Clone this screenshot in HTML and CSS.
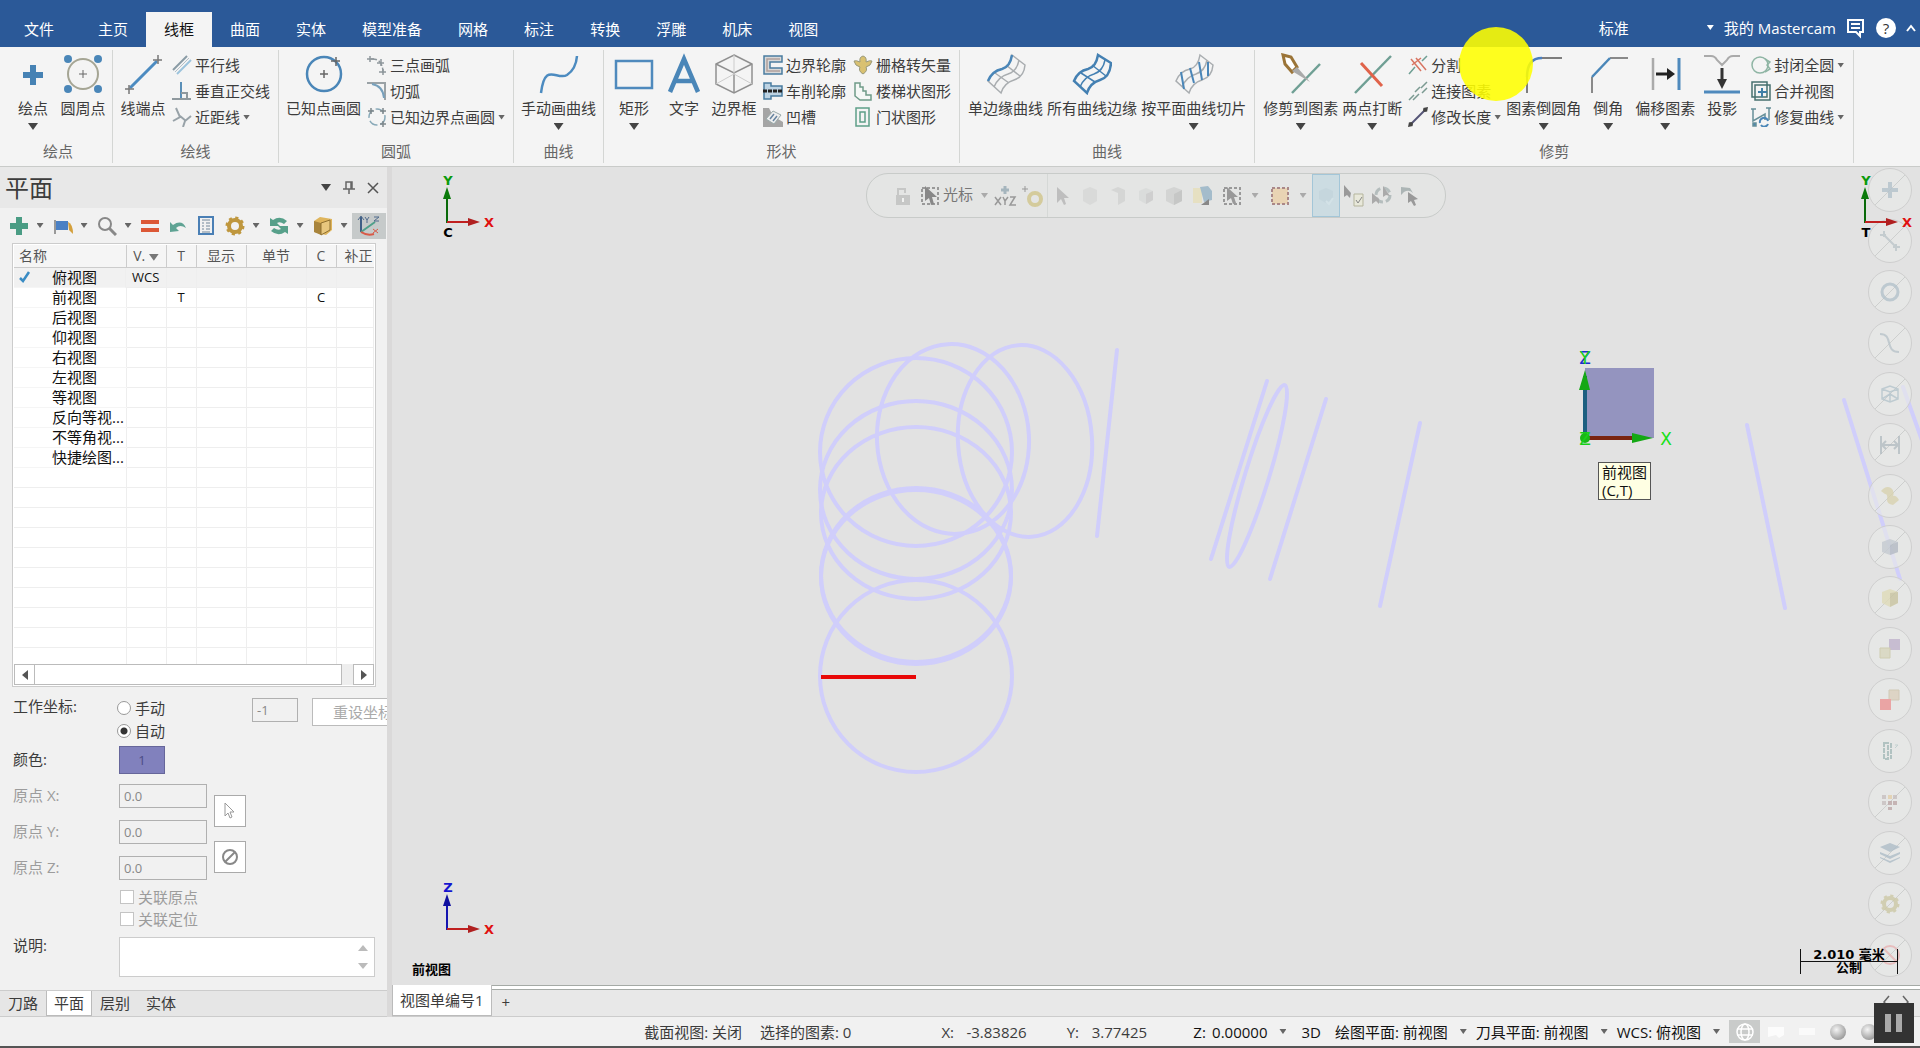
FILE: index.html
```html
<!DOCTYPE html>
<html lang="zh-CN">
<head>
    <meta charset="UTF-8" />
    <title>Mastercam</title>
    <link rel="stylesheet" href="styles.css">
</head>
<body>
    <header class="titlebar">
        <nav class="tabs">
            <button class="tab tab-file">文件</button>
            <button class="tab">主页</button>
            <button class="tab active">线框</button>
            <button class="tab">曲面</button>
            <button class="tab">实体</button>
            <button class="tab">模型准备</button>
            <button class="tab">网格</button>
            <button class="tab">标注</button>
            <button class="tab">转换</button>
            <button class="tab">浮雕</button>
            <button class="tab">机床</button>
            <button class="tab">视图</button>
        </nav>
        <div class="account">
            <button class="style-pick"><span>标准</span><i class="caret"></i></button>
            <a class="account-link" href="#">我的 Mastercam</a>
            <button class="icon-btn" aria-label="反馈"><svg width="20" height="22" fill="none" stroke="#fff" stroke-width="2"><path d="M2 3h15v12h-3v4l-4-4H2zM5 7h9M5 11h9"/></svg></button>
            <button class="help" aria-label="帮助">?</button>
            <button class="icon-btn" aria-label="折叠"><svg width="10" height="8" fill="none" stroke="#fff" stroke-width="2"><path d="M1 7l4-5 4 5"/></svg></button>
        </div>
    </header>

    <section class="ribbon">
        <div class="group">
            <div class="group-body">
                <button class="big"><svg width="40" height="42"><path d="M20 12v20M10 22h20" stroke="#4682b4" stroke-width="6"/></svg><span>绘点</span><i class="drop"></i></button>
                <button class="big"><svg width="40" height="42"><circle cx="20" cy="21" r="15" fill="none" stroke="#a5a594" stroke-width="2"/><path d="M20 17v8M16 21h8" stroke="#666"/><g fill="#4a86b8"><circle cx="5" cy="6" r="4"/><circle cx="35" cy="6" r="4"/><circle cx="5" cy="36" r="4"/><circle cx="35" cy="36" r="4"/></g></svg><span>圆周点</span></button>
            </div>
            <div class="group-name">绘点</div>
        </div>
        <div class="group">
            <div class="group-body">
                <button class="big"><svg width="40" height="42"><path d="M7 35L34 8" stroke="#4c8bc0" stroke-width="3"/><path d="M2 36h9M6 32v9M30 7h9M35 2v9" stroke="#777" stroke-width="1.5"/></svg><span>线端点</span></button>
                <div class="stack">
                    <button class="small"><svg width="20" height="20" stroke-width="2"><path d="M1 15L15 1" stroke="#8a9ba5"/><path d="M5 19L19 5" stroke="#9cc3dc"/><path d="M3 17L17 3" stroke="#b4bfc6" stroke-width="1"/></svg><span>平行线</span></button>
                    <button class="small"><svg width="20" height="20" fill="none"><path d="M9 1v17" stroke="#5a8fb8" stroke-width="2"/><path d="M0 18h19M9 12h6v6" stroke="#8f999e" stroke-width="2"/></svg><span>垂直正交线</span></button>
                    <button class="small"><svg width="20" height="20" fill="none" stroke="#98a2a8" stroke-width="2"><path d="M4 1l4 9-7 4M8 9l6 5M19 9l-6 5-2 6"/></svg><span>近距线</span><i class="caret"></i></button>
                </div>
            </div>
            <div class="group-name">绘线</div>
        </div>
        <div class="group">
            <div class="group-body">
                <button class="big"><svg width="40" height="42"><circle cx="20" cy="21" r="17" fill="none" stroke="#4a86b8" stroke-width="2.5"/><path d="M16 21h8M20 17v8M27 8h9M32 4v9" stroke="#666" stroke-width="1.5"/></svg><span>已知点画圆</span></button>
                <div class="stack">
                    <button class="small"><svg width="20" height="20" fill="none" stroke="#8e979c" stroke-width="1.5"><path d="M4 4q12-1 12 14" stroke-dasharray="6 2"/><path d="M0 4h7M3 1v6M10 8h7M14 4v7M12 17h7M16 14v6"/></svg><span>三点画弧</span></button>
                    <button class="small"><svg width="20" height="20" fill="none" stroke-width="2"><path d="M0 2h18v17" stroke="#9aa2a6"/><path d="M5 3q11 2 12 14" stroke="#77a0bc"/></svg><span>切弧</span></button>
                    <button class="small"><svg width="20" height="20" fill="none" stroke-width="1.5"><circle cx="10" cy="10" r="8" stroke="#88a9b8" stroke-dasharray="9 3"/><path d="M1 4h6M4 1v6M13 4h6M16 1v6M13 17h6M16 14v6" stroke="#7d868b"/></svg><span>已知边界点画圆</span><i class="caret"></i></button>
                </div>
            </div>
            <div class="group-name">圆弧</div>
        </div>
        <div class="group">
            <div class="group-body">
                <button class="big"><svg width="40" height="42"><path d="M2 40C6 8 18 28 28 22Q37 16 38 3" fill="none" stroke="#4c8bc0" stroke-width="2.5"/></svg><span>手动画曲线</span><i class="drop"></i></button>
            </div>
            <div class="group-name">曲线</div>
        </div>
        <div class="group">
            <div class="group-body">
                <button class="big"><svg width="40" height="42"><rect x="2" y="8" width="36" height="27" fill="none" stroke="#4f8abd" stroke-width="2.5"/></svg><span>矩形</span><i class="drop"></i></button>
                <button class="big"><svg width="40" height="42"><path d="M6 39L20 6l14 33M11 28h18" fill="none" stroke="#4a86b8" stroke-width="4.5"/></svg><span>文字</span></button>
                <button class="big"><svg width="40" height="42" fill="none" stroke="#909090" stroke-width="1.5"><path d="M20 2l18 9v20l-18 9-18-9V11z"/><path d="M2 11l18 9 18-9M20 20v20"/><path d="M20 2v19L2 31M20 21l18 10" stroke="#ccc" stroke-width="1"/></svg><span>边界框</span></button>
                <div class="stack">
                    <button class="small"><svg width="20" height="20"><path d="M1 1h18v6H7v6h12v6H1z" fill="#d8d8d8" stroke="#4a7ca0" stroke-width="1.5"/><path d="M17 4H4v12h13" fill="none" stroke="#b0a09c" stroke-width="1.5"/></svg><span>边界轮廓</span></button>
                    <button class="small"><svg width="20" height="20"><path d="M1 2h7v3h11v10H8v3H1z" fill="#bdd3e3" stroke="#4a7ca0" stroke-width="1.5"/><path d="M0 10h20" stroke="#222" stroke-width="3" stroke-dasharray="4 1"/></svg><span>车削轮廓</span></button>
                    <button class="small"><svg width="20" height="20"><path d="M0 1h6l4 8 10 6v5H0z" fill="#a5a5a5"/><path d="M3 12l7-8 8 4-7 9z" fill="#eee" stroke="#9aa" /><path d="M7 12l4-5M10 14l4-5" stroke="#6784a0" stroke-width="1.5"/></svg><span>凹槽</span></button>
                </div>
                <div class="stack">
                    <button class="small"><svg width="20" height="20"><path d="M10 1q4 1 3 6 4-2 6-1-1 5-6 6 2 4-3 7-5-3-3-7-5-1-6-6 2-1 6 1-1-5 3-6z" fill="#d9c171" stroke="#9a9a7d"/></svg><span>栅格转矢量</span></button>
                    <button class="small"><svg width="20" height="20"><path d="M2 2h5v4h3v4h3v4h5v5H7L2 15z" fill="#f5f8f6" stroke="#6f9a88" stroke-width="1.5"/></svg><span>楼梯状图形</span></button>
                    <button class="small"><svg width="20" height="20" fill="none" stroke="#5d9f88" stroke-width="1.5"><path d="M3 1h13v18H3zM7 5h5v10H7z"/></svg><span>门状图形</span></button>
                </div>
            </div>
            <div class="group-name">形状</div>
        </div>
        <div class="group roomy">
            <div class="group-body">
                <button class="big"><svg width="40" height="42" fill="none" stroke="#a9adb0" stroke-width="1.5"><path d="M2 28Q6 18 16 16Q24 14 26 2L39 12Q38 24 28 27Q18 30 15 40zM8 34Q12 24 22 21Q31 18 33 7M9 20l14 10M20 12l14 11"/><path d="M2 28Q6 18 16 16Q24 14 26 2" stroke="#4a86b8" stroke-width="2.5"/></svg><span>单边缘曲线</span></button>
                <button class="big"><svg width="40" height="42" fill="none" stroke="#4480b2" stroke-width="2.5"><path d="M2 28Q6 18 16 16Q24 14 26 2L39 10Q38 24 28 27Q18 30 15 40z"/><path d="M8 34Q12 24 22 21Q31 18 33 7M9 20l14 9M20 12l14 11" stroke-width="1.5"/></svg><span>所有曲线边缘</span></button>
                <button class="big"><svg width="40" height="42" fill="none" stroke="#a9adb0" stroke-width="1.5"><path d="M2 28Q6 18 16 16Q24 14 26 2L39 12Q38 24 28 27Q18 30 15 40zM8 34Q12 24 22 21Q31 18 33 7"/><path d="M7 19l3 17M16 15l4 15M25 9l3 18M34 9v14" stroke="#4a86b8" stroke-width="2"/></svg><span>按平面曲线切片</span><i class="drop"></i></button>
            </div>
            <div class="group-name">曲线</div>
        </div>
        <div class="group roomy">
            <div class="group-body">
                <button class="big"><svg width="40" height="42"><path d="M11 40L39 11" stroke="#6f9f94" stroke-width="2.5"/><path d="M2 2l8 2 6 10-5 5-7-8z" fill="#fff" stroke="#9b7437" stroke-width="3"/><path d="M11 18l5-4 13 15z" fill="#aaa"/></svg><span>修剪到图素</span><i class="drop"></i></button>
                <button class="big"><svg width="40" height="42"><path d="M3 40L39 3" stroke="#6f9f94" stroke-width="2.5"/><path d="M9 10l21 23" stroke="#e0634a" stroke-width="3"/></svg><span>两点打断</span><i class="drop"></i></button>
                <div class="stack">
                    <button class="small"><svg width="20" height="20" stroke-width="1.5"><path d="M1 19l6-7M14 6l5-5" stroke="#6f9f94"/><path d="M3 4l10 12M8 3l10 12M4 10l9-7" stroke="#d87562"/></svg><span>分割</span></button>
                    <button class="small"><svg width="20" height="20" stroke="#7b9a92" stroke-width="1.5"><path d="M1 19l5-5M13 7l6-6M5 19l6-6M14 12l5-5M7 11l5-5" /></svg><span>连接图素</span></button>
                    <button class="small"><svg width="20" height="20"><path d="M2 18L18 2" stroke="#557" stroke-width="2"/><path d="M0 20l1-5 4 4zM20 0l-5 1 4 4z" fill="#444"/><circle cx="3" cy="17" r="2" fill="#444"/><circle cx="17" cy="3" r="2" fill="#444"/></svg><span>修改长度</span><i class="caret"></i></button>
                </div>
                <button class="big"><svg width="40" height="42" fill="none" stroke-width="1.5"><path d="M3 40V24M18 5h20" stroke="#555"/><path d="M3 24Q3 5 18 5" stroke="#4a7fc0" stroke-width="2.5"/></svg><span>图素倒圆角</span><i class="drop"></i></button>
                <button class="big"><svg width="40" height="42" fill="none" stroke-width="1.5"><path d="M4 40V24M22 5h18" stroke="#666"/><path d="M4 24L22 5" stroke="#4a86b8" stroke-width="2.5"/></svg><span>倒角</span><i class="drop"></i></button>
                <button class="big"><svg width="40" height="42"><path d="M8 5v32" stroke="#aaa" stroke-width="2.5"/><path d="M34 5v32" stroke="#4f8abd" stroke-width="3"/><path d="M11 21h12" stroke="#222" stroke-width="3"/><path d="M22 15l8 6-8 6z" fill="#222"/></svg><span>偏移图素</span><i class="drop"></i></button>
                <button class="big"><svg width="40" height="42"><path d="M2 3h7q4 0 6 4l5 5 5-5q2-4 6-4h7" fill="none" stroke="#aaa" stroke-width="2"/><path d="M20 15v14" stroke="#333" stroke-width="3"/><path d="M15 26h10l-5 10z" fill="#333"/><path d="M2 39h36" stroke="#4f8abd" stroke-width="3"/></svg><span>投影</span></button>
                <div class="stack">
                    <button class="small"><svg width="20" height="20" fill="none" stroke="#8fb5a4" stroke-width="1.5"><circle cx="9" cy="10" r="8"/><path d="M14 4l5 3-3 3 3 4-5 3"/></svg><span>封闭全圆</span><i class="caret"></i></button>
                    <button class="small"><svg width="20" height="20" fill="none" stroke="#47706f" stroke-width="1.5"><path d="M1 1h15v15H1zM4 4h15v15H4z"/><path d="M11 7v9M7 11h9" stroke="#3f7fa8" stroke-width="2"/></svg><span>合并视图</span></button>
                    <button class="small"><svg width="20" height="20" fill="none" stroke="#668f98" stroke-width="1.5"><path d="M2 2v12l12-7v6M18 1v12M0 2h5M15 1h5"/><path d="M9 16a4 4 0 0 1 8-2M17 17a4 4 0 0 1-7 1" stroke="#4a86b8" stroke-width="2"/><path d="M2 16h3v3H2z" fill="#4a86b8"/></svg><span>修复曲线</span><i class="caret"></i></button>
                </div>
            </div>
            <div class="group-name">修剪</div>
        </div>
        <div class="highlight"></div>
    </section>

    <main class="workspace">
        <aside class="panel">
            <div class="panel-title">
                <h1>平面</h1>
                <div class="panel-actions">
                    <button class="icon-btn" aria-label="选项"><i class="drop"></i></button>
                    <button class="icon-btn" aria-label="固定"><svg width="12" height="14" fill="none" stroke="#666" stroke-width="1.5"><path d="M3 1h6v7H3zM0 8h12M6 8v5M8 1v7"/></svg></button>
                    <button class="icon-btn" aria-label="关闭"><svg width="12" height="12" stroke="#555" stroke-width="1.5"><path d="M1 1l10 10M11 1L1 11"/></svg></button>
                </div>
            </div>
            <div class="panel-tools">
                <button class="tool split" aria-label="新建"><svg width="20" height="20"><path d="M10 1v18M1 10h18" stroke="#4a9c84" stroke-width="6"/></svg><i class="caret"></i></button>
                <button class="tool split" aria-label="选择"><svg width="20" height="20"><path d="M2 4v14" stroke="#999" stroke-width="2"/><path d="M3 5h12v9H3z" fill="#4a80c4"/><path d="M15 6q5 2 5 12l-4-4z" fill="#d4a03c"/></svg><i class="caret"></i></button>
                <button class="tool split" aria-label="查找"><svg width="20" height="20" fill="none" stroke="#888"><circle cx="8" cy="8" r="6" stroke-width="2"/><path d="M12 12l7 7" stroke-width="3"/></svg><i class="caret"></i></button>
                <button class="tool" aria-label="设为相同"><svg width="20" height="20"><path d="M1 4h18v4H1zM1 12h18v4H1z" fill="#dc5836"/></svg></button>
                <button class="tool" aria-label="重设"><svg width="20" height="20"><path d="M2 6v10l9-1-3-3q4-4 10 0-4-9-13-3z" fill="#5fa394"/></svg></button>
                <button class="tool" aria-label="属性"><svg width="20" height="20" fill="none" stroke="#4a7fb5"><path d="M3 1h14v17H3z" stroke-width="2"/><path d="M6 4h8M6 7h2M10 7h4M6 10h2M10 10h4M6 13h2M10 13h4M6 16h8" stroke="#73879a"/></svg></button>
                <button class="tool split" aria-label="显示选项"><svg width="20" height="20" fill="none" stroke="#bf973e"><circle cx="10" cy="10" r="6" stroke-width="4"/><circle cx="10" cy="10" r="8" stroke-width="3" stroke-dasharray="3 3.28"/></svg><i class="caret"></i></button>
                <button class="tool split" aria-label="刷新"><svg width="20" height="20"><path d="M1 2l3 2q7-5 14 1l-3 3q-4-3-7-1l3 3H1zM19 18l-3-2q-7 5-14-1l3-3q4 3 7 1l-3-3h10z" fill="#57a08a"/></svg><i class="caret"></i></button>
                <button class="tool split" aria-label="实体"><svg width="20" height="20"><path d="M1 5l6-4 12 2v11l-6 5-12-3z" fill="#dfb55c"/><path d="M1 5l7 2v12l-7-3z" fill="#a8843c"/><path d="M8 7l9-3v10l-9 5z" fill="#e8c77e" stroke="#8f7030"/></svg><i class="caret"></i></button>
                <button class="tool pressed" aria-label="显示坐标轴"><svg width="24" height="22" fill="none"><path d="M4 2v15" stroke="#3f5f86" stroke-width="2"/><path d="M4 17L18 7" stroke="#4fa08a" stroke-width="2"/><path d="M4 17q6 4 13 2" stroke="#d85a48" stroke-width="2"/><path d="M1 5l3-4 3 4M8 2l2 3 2-3M10 5v3M17 2h5l-5 4h5" stroke="#516b8c"/><path d="M16 14l5 4M21 14l-5 4" stroke="#d85a48"/></svg></button>
            </div>

            <div class="grid-box">
                <div class="grid-rows">
                    <table class="planes">
                        <colgroup><col class="c-name"><col class="c-wcs"><col class="c-t"><col class="c-show"><col class="c-sec"><col class="c-t"><col></colgroup>
                        <thead>
                            <tr><th class="left">名称</th><th class="sorted">V. <i class="drop"></i></th><th>T</th><th>显示</th><th>单节</th><th>C</th><th class="cut">补正</th></tr>
                        </thead>
                        <tbody>
                            <tr class="selected"><td class="name checked"><svg width="12" height="12" fill="none" stroke="#3a8cc4" stroke-width="2.5"><path d="M1 7l3 3 6-9"/></svg>俯视图</td><td>WCS</td><td></td><td></td><td></td><td></td><td></td></tr>
                            <tr><td class="name">前视图</td><td></td><td>T</td><td></td><td></td><td>C</td><td></td></tr>
                            <tr><td class="name">后视图</td><td></td><td></td><td></td><td></td><td></td><td></td></tr>
                            <tr><td class="name">仰视图</td><td></td><td></td><td></td><td></td><td></td><td></td></tr>
                            <tr><td class="name">右视图</td><td></td><td></td><td></td><td></td><td></td><td></td></tr>
                            <tr><td class="name">左视图</td><td></td><td></td><td></td><td></td><td></td><td></td></tr>
                            <tr><td class="name">等视图</td><td></td><td></td><td></td><td></td><td></td><td></td></tr>
                            <tr><td class="name">反向等视...</td><td></td><td></td><td></td><td></td><td></td><td></td></tr>
                            <tr><td class="name">不等角视...</td><td></td><td></td><td></td><td></td><td></td><td></td></tr>
                            <tr><td class="name">快捷绘图...</td><td></td><td></td><td></td><td></td><td></td><td></td></tr>
                            <tr><td></td><td></td><td></td><td></td><td></td><td></td><td></td></tr>
                            <tr><td></td><td></td><td></td><td></td><td></td><td></td><td></td></tr>
                            <tr><td></td><td></td><td></td><td></td><td></td><td></td><td></td></tr>
                            <tr><td></td><td></td><td></td><td></td><td></td><td></td><td></td></tr>
                            <tr><td></td><td></td><td></td><td></td><td></td><td></td><td></td></tr>
                            <tr><td></td><td></td><td></td><td></td><td></td><td></td><td></td></tr>
                            <tr><td></td><td></td><td></td><td></td><td></td><td></td><td></td></tr>
                            <tr><td></td><td></td><td></td><td></td><td></td><td></td><td></td></tr>
                            <tr><td></td><td></td><td></td><td></td><td></td><td></td><td></td></tr>
                            <tr><td></td><td></td><td></td><td></td><td></td><td></td><td></td></tr>
                        </tbody>
                    </table>
                </div>
                <div class="scrollbar">
                    <button aria-label="向左"><svg width="8" height="12"><path d="M7 1v10L1 6z" fill="#555"/></svg></button>
                    <div class="thumb"></div>
                    <button aria-label="向右"><svg width="8" height="12"><path d="M1 1v10l6-5z" fill="#555"/></svg></button>
                </div>
            </div>

            <form class="props">
                <div class="row work">
                    <span class="label">工作坐标:</span>
                    <div class="radios">
                        <label><input type="radio" name="wcs">手动</label>
                        <label><input type="radio" name="wcs" checked>自动</label>
                    </div>
                    <input class="offset" type="text" value="-1" aria-label="工作坐标值" disabled>
                    <button class="reset" type="button" disabled>重设坐标</button>
                </div>
                <div class="row">
                    <span class="label">颜色:</span>
                    <button class="swatch" type="button">1</button>
                </div>
                <div class="origin">
                    <div>
                        <div class="row dim"><label class="label" for="ox">原点 X:</label><input id="ox" type="text" value="0.0" disabled></div>
                        <div class="row dim"><label class="label" for="oy">原点 Y:</label><input id="oy" type="text" value="0.0" disabled></div>
                        <div class="row dim"><label class="label" for="oz">原点 Z:</label><input id="oz" type="text" value="0.0" disabled></div>
                    </div>
                    <div class="origin-actions">
                        <button type="button" aria-label="选择原点"><svg width="12" height="18" fill="none" stroke="#999"><path d="M1 1v13l3-3 2 5 2-1-2-5h4z"/></svg></button>
                        <button type="button" aria-label="清除原点"><svg width="18" height="18" fill="none" stroke="#888" stroke-width="2"><circle cx="9" cy="9" r="7"/><path d="M4 14L14 4"/></svg></button>
                    </div>
                </div>
                <div class="checks">
                    <label><input type="checkbox" disabled>关联原点</label>
                    <label><input type="checkbox" disabled>关联定位</label>
                </div>
                <div class="row note">
                    <label class="label" for="note">说明:</label>
                    <div class="note-box">
                        <textarea id="note"></textarea>
                        <span class="spin"><i class="drop up"></i><i class="drop"></i></span>
                    </div>
                </div>
            </form>

            <nav class="panel-tabs">
                <button>刀路</button><button class="active">平面</button><button>层别</button><button>实体</button>
            </nav>
        </aside>

        <section class="view">
            <div class="canvas">
                <svg class="drawing" viewBox="392 167 1528 818" preserveAspectRatio="xMinYMin meet">
                    <g fill="none" stroke="#d0cefb" stroke-width="4" stroke-linecap="round">
                        <ellipse cx="916" cy="452" rx="96" ry="94"/>
                        <ellipse cx="916" cy="490" rx="96" ry="89"/>
                        <ellipse cx="916" cy="513" rx="95" ry="86"/>
                        <ellipse cx="916" cy="575" rx="95" ry="87"/>
                        <ellipse cx="916" cy="577" rx="95" ry="87"/>
                        <ellipse cx="916" cy="676" rx="96" ry="96"/>
                        <ellipse cx="953" cy="439" rx="76" ry="95" transform="rotate(-3 953 439)"/>
                        <ellipse cx="1025" cy="441" rx="67" ry="96" transform="rotate(-4 1025 441)"/>
                        <ellipse cx="1257" cy="476" rx="12" ry="95" transform="rotate(17 1257 476)"/>
                        <path d="M1117 350L1097 536M1267 381L1211 559M1326 399L1270 579M1420 423L1380 606M1747 425L1785 608M1844 400L1900 579M1903 387L1924 446"/>
                    </g>
                    <path d="M821 677h95" stroke="#e80808" stroke-width="4"/>
                    <!-- plane cube -->
                    <rect x="1585" y="368" width="69" height="70" fill="#9494bf"/>
                    <path d="M1585 438v-62" stroke="#1d5f80" stroke-width="4"/>
                    <path d="M1585 438h50" stroke="#7a2410" stroke-width="4"/>
                    <path d="M1579 390h11l-5-20zM1632 433v10l21-5z" fill="#14a814"/>
                    <circle cx="1585" cy="438" r="5" fill="#18b818"/>
                    <g class="axis-text" text-anchor="middle">
                        <text x="1585" y="364" fill="#1c2fd0">Z</text>
                        <text x="1585" y="364" fill="#18d018">Y</text>
                        <text x="1585" y="445" fill="#18d018">Z</text>
                        <text x="1666" y="445" fill="#18e018">X</text>
                    </g>
                </svg>
                <div class="cube-tip">前视图<br>(C,T)</div>

                <svg class="gnomon gnomon-tl" width="60" height="68">
                    <path d="M9 50V24" stroke="#0a6a0a" stroke-width="2"/><path d="M5 26l4-12 4 12z" fill="#0a7a0a"/>
                    <path d="M9 49h26" stroke="#c02020" stroke-width="2"/><path d="M30 45l12 4-12 4z" fill="#b02020"/>
                    <text x="10" y="12" fill="#0a9a0a">Y</text><text x="51" y="54" fill="#e01010">X</text><text x="10" y="64">C</text>
                </svg>
                <svg class="gnomon gnomon-tr" width="60" height="68">
                    <path d="M9 50V24" stroke="#0a6a0a" stroke-width="2"/><path d="M5 26l4-12 4 12z" fill="#0a7a0a"/>
                    <path d="M9 49h26" stroke="#c02020" stroke-width="2"/><path d="M30 45l12 4-12 4z" fill="#b02020"/>
                    <text x="10" y="12" fill="#0a9a0a">Y</text><text x="51" y="54" fill="#e01010">X</text><text x="10" y="64">T</text>
                </svg>
                <svg class="gnomon gnomon-bl" width="60" height="60">
                    <path d="M9 50V24" stroke="#1515b0" stroke-width="2"/><path d="M5 26l4-12 4 12z" fill="#1010a0"/>
                    <path d="M9 49h26" stroke="#c02020" stroke-width="2"/><path d="M30 45l12 4-12 4z" fill="#b02020"/>
                    <text x="10" y="12" fill="#1515d0">Z</text><text x="51" y="54" fill="#e01010">X</text>
                </svg>
                <div class="view-name">前视图</div>

                <div class="select-bar">
                    <button aria-label="锁定"><svg class="faint" width="20" height="22"><path d="M3 10h14v10H3z" fill="#aaa"/><path d="M5 10V4h7v4" fill="none" stroke="#aaa" stroke-width="2"/><path d="M10 13v4" stroke="#fff" stroke-width="2"/></svg></button>
                    <button class="cursor-mode"><svg width="20" height="22"><path d="M2 3h16v16H2z" fill="none" stroke="#999" stroke-width="2" stroke-dasharray="3 2"/><path d="M5 1v15l4-3 2 7 3-1-2-7h5z" fill="#888"/></svg><span>光标</span><i class="caret"></i></button>
                    <button class="xyz" aria-label="坐标"><svg width="24" height="22" fill="none" stroke="#999" stroke-width="1.5"><path d="M12 1v8M8 5h8" stroke="#a5b5bd" stroke-width="3"/><path d="M2 12l6 8M8 12l-6 8M10 12l2 4 3-4M12 16v4M17 12h5l-5 8h6"/></svg></button>
                    <button aria-label="自动抓点设置"><svg width="24" height="22" fill="none"><path d="M1 4h6M4 1v6" stroke="#999"/><circle cx="14" cy="14" r="6" stroke="#d4cb9c" stroke-width="4"/></svg></button>
                    <span class="sep"></span>
                    <button aria-label="选择"><svg class="faint" width="20" height="22"><path d="M5 2v16l4-4 3 6 2-1-2-6h5z" fill="#999"/></svg></button>
                    <button aria-label="边界"><svg class="fainter" width="20" height="22"><path d="M3 5l7-3 7 3v11l-7 4-7-4z" fill="#bbb"/></svg></button>
                    <button aria-label="面"><svg class="fainter" width="20" height="22"><path d="M3 5l7-3 7 3v11l-7 4V8z" fill="#aaa"/></svg></button>
                    <button aria-label="实体"><svg class="faint" width="20" height="22"><path d="M3 6l7-3 7 3v9l-7 4-7-4z" fill="#d2d4d4"/><path d="M10 9l7-3v9l-7 4z" fill="#bbb"/></svg></button>
                    <button aria-label="主体"><svg class="faint" width="20" height="22"><path d="M2 5l8-3 8 3v11l-8 4-8-4z" fill="#c4c4c4"/><path d="M10 9l8-4v11l-8 4z" fill="#aaa"/></svg></button>
                    <button aria-label="背面"><svg width="22" height="22"><path d="M2 3h9v15H2z" fill="#e6e0c2"/><path d="M9 2l8-1 4 5v9l-8 2z" fill="#a4bccb"/><path d="M10 20l8-6v6z" fill="#888"/></svg></button>
                    <button class="menu" aria-label="窗选"><svg width="20" height="22"><path d="M2 3h16v16H2z" fill="none" stroke="#999" stroke-width="2" stroke-dasharray="3 2"/><path d="M5 2v14l4-3 2 6 3-1-2-6h4z" fill="#999"/></svg><i class="caret"></i></button>
                    <button class="menu" aria-label="范围"><svg width="20" height="22"><path d="M2 3h16v16H2z" fill="#e9d4b4" stroke="#a88" stroke-width="2" stroke-dasharray="3 2"/></svg><i class="caret"></i></button>
                    <button class="on" aria-label="仅选"><svg class="faint" width="20" height="22"><path d="M3 6l7-3 7 3v8l-7 4-7-4z" fill="#bfd2da"/><path d="M10 16l3 3 4-6" fill="none" stroke="#dbe8ec" stroke-width="2"/></svg></button>
                    <button aria-label="验证选择"><svg width="22" height="24"><path d="M1 1v12l3-2 3 3 1-5z" fill="#999"/><path d="M11 10h9v12h-9z" fill="#e8e8da" stroke="#b5b59d"/><path d="M13 16l2 3 4-6" fill="none" stroke="#888"/></svg></button>
                    <button aria-label="反选"><svg width="22" height="22"><circle cx="12" cy="10" r="7" fill="none" stroke="#b4bdbd" stroke-width="3" stroke-dasharray="8 3"/><path d="M1 8v11l4-3 3 3V14zM12 1v11l3-2 4 1z" fill="#aaa"/></svg></button>
                    <button aria-label="选择最后"><svg width="22" height="22"><path d="M2 2v8l3-3q5-3 9 1l-3-5z" fill="#acb5b5"/><path d="M9 7v11l3-2 3 5 2-1-2-5 4-1z" fill="#999"/></svg></button>
                </div>

                <div class="masks">
                    <button class="slash" aria-label="点"><svg width="24" height="24"><path d="M12 4v16M4 12h16" stroke="#b4c2cb" stroke-width="4"/></svg></button>
                    <button class="slash" aria-label="线"><svg width="24" height="24"><path d="M5 5l13 13M2 6h6M6 2v6M15 18h7M18 15v7" stroke="#bcc6ca" stroke-width="2"/></svg></button>
                    <button class="slash" aria-label="圆弧"><svg width="24" height="24"><circle cx="12" cy="12" r="8" fill="none" stroke="#b4c2cb" stroke-width="3"/></svg></button>
                    <button class="slash" aria-label="曲线"><svg width="24" height="24"><path d="M2 3C16 3 6 21 21 21" fill="none" stroke="#b9c4ca" stroke-width="2"/></svg></button>
                    <button class="slash" aria-label="线框"><svg width="24" height="24" fill="none" stroke="#b5c5cd" stroke-width="1.5"><path d="M4 7l8-3 8 3v10l-8 3-8-3zM4 7l8 3 8-3M12 10v10M4 17l8-5 8 5"/></svg></button>
                    <button class="slash" aria-label="标注"><svg width="24" height="24" fill="none" stroke="#b4bdc2" stroke-width="2"><path d="M3 3v18M21 3v18M4 12h16M8 8l-4 4 4 4M16 8l4 4-4 4"/></svg></button>
                    <button class="slash" aria-label="曲面"><svg width="24" height="24"><path d="M3 7q5-6 10-3 4 3 2 8 3-1 6 4l-6 5q-6-1-6-5 1-6-2-6z" fill="#d9d3b0"/></svg></button>
                    <button class="slash" aria-label="网格"><svg width="24" height="24"><path d="M4 7l8-3 8 3v10l-8 3-8-3z" fill="#c5cbd2"/><path d="M12 10l8-3v10l-8 3z" fill="#b4bac4"/></svg></button>
                    <button class="slash" aria-label="实体"><svg width="24" height="24"><path d="M4 6l8-3 8 3v11l-8 4-8-4z" fill="#dfdbb8"/><path d="M12 7l8-1v11l-8 4z" fill="#c9c4a0"/></svg></button>
                    <button aria-label="群组"><svg width="24" height="24"><path d="M11 2h11v11H11z" fill="#c0b3cc"/><path d="M2 11h10v10H2z" fill="#d8d6bd" stroke="#cac8a5"/></svg></button>
                    <button aria-label="结果"><svg width="24" height="24"><path d="M11 2h10v10H11z" fill="#dcd0bd" stroke="#ccc3ac"/><path d="M2 11h11v11H2z" fill="#eb9494"/></svg></button>
                    <button aria-label="命名"><svg width="24" height="24"><path d="M6 4h4v16H6zM13 4v16" fill="none" stroke="#a5bab8" stroke-width="2" stroke-dasharray="5 1"/><path d="M17 6h3M17 9l3-3" stroke="#bcc"/></svg></button>
                    <button class="slash" aria-label="颜色"><svg width="24" height="24"><path d="M4 5h4v4H4zM15 5h4v4h-4zM4 11h4v4H4z" fill="#c8c0c0"/><path d="M10 5h4v4h-4z" fill="#e3cfaa"/><path d="M10 11h4v4h-4zM15 11h4v4h-4zM10 17h4v3h-4z" fill="#bda8a8"/></svg></button>
                    <button class="slash" aria-label="层别"><svg width="24" height="24" fill="#aebdc8"><path d="M2 6l10-4 10 4-10 5z"/><path d="M2 11l10 4 10-4v2l-10 5-10-5zM2 16l10 4 10-4v1l-10 5-10-5z"/></svg></button>
                    <button class="slash" aria-label="图素属性"><svg width="24" height="24" fill="none" stroke="#cdc9a6"><circle cx="12" cy="12" r="6" stroke-width="4"/><circle cx="12" cy="12" r="8" stroke-width="3" stroke-dasharray="3 3.28"/></svg></button>
                    <button class="slash" aria-label="清除"><svg width="24" height="24" fill="none" stroke="#e8b3b3" stroke-width="2"><circle cx="12" cy="12" r="9"/><path d="M6 6l12 12"/></svg></button>
                </div>

                <div class="ruler">
                    <span class="ruler-value">2.010 毫米</span>
                    <span class="ruler-unit">公制</span>
                </div>
            </div>
            <div class="sheets">
                <button class="sheet">视图单编号1</button>
                <button class="sheet-add" aria-label="新建视图单">+</button>
                <span class="sheet-nav"><svg width="28" height="14" fill="none" stroke="#666" stroke-width="1.5"><path d="M7 1L2 7l5 6M21 1l5 6-5 6"/></svg></span>
            </div>
        </section>
    </main>

    <footer class="status">
        <span class="st-section">截面视图: 关闭</span>
        <span class="st-count">选择的图素: 0</span>
        <span class="coord coord-x"><b>X:</b>-3.83826</span>
        <span class="coord"><b>Y:</b>3.77425</span>
        <button class="coord coord-z"><b>Z:</b>0.00000<i class="caret"></i></button>
        <button class="st-3d">3D</button>
        <button class="st-plane">绘图平面: 前视图<i class="caret"></i></button>
        <button class="st-plane">刀具平面: 前视图<i class="caret"></i></button>
        <button class="st-plane">WCS: 俯视图<i class="caret"></i></button>
        <div class="shading">
            <button class="on" aria-label="线框"><svg width="20" height="20" fill="none" stroke="#fff" stroke-width="1.5"><circle cx="10" cy="10" r="8"/><ellipse cx="10" cy="10" rx="4" ry="8"/><path d="M2 7h16M2 13h16"/></svg></button>
            <button aria-label="暗色线框"><svg width="20" height="20"><path d="M2 5h16v8l-5 3-3-3-8 2z" fill="#fcfcfc"/></svg></button>
            <button aria-label="无隐藏线"><svg width="20" height="20"><path d="M2 6h16v7H2z" fill="#fafafa"/></svg></button>
            <button aria-label="着色"><i class="ball"></i></button>
            <button aria-label="材质"><i class="ball"></i></button>
        </div>
    </footer>

    <button class="pause" aria-label="暂停"><svg width="20" height="20" fill="#aaa"><path d="M1 1h6v18H1zM12 1h6v18h-6z"/></svg></button>
</body>
</html>
```
FILE: styles.css
```css
:root {
    --blue: #2b5998;
    --ribbon: #f4f4f4;
    --panel: #f1f1f1;
    --canvas: #e2e2e2;
    --line: #c9cbc9;
    --text: #3c3c3c;
    --muted: #9c9c9c;
}

* {
    margin: 0;
    padding: 0;
    box-sizing: border-box;
}

body {
    display: flex;
    flex-direction: column;
    height: 100vh;
    overflow: hidden;
    background: var(--panel);
    border-bottom: 2px solid #555;
    color: var(--text);
    font: 15px/20px "Open Sans", "Noto Sans CJK SC", sans-serif;
}

button,
input,
textarea {
    font: inherit;
    color: inherit;
    background: none;
    border: none;
}

button {
    white-space: nowrap;
}

svg {
    display: block;
    flex: none;
}

.caret {
    flex: none;
    width: 7px;
    height: 5px;
    background: #666;
    clip-path: polygon(0 0, 100% 0, 50% 100%);
}

.drop {
    display: inline-block;
    width: 10px;
    height: 7px;
    background: #444;
    clip-path: polygon(0 0, 100% 0, 50% 100%);
}

.drop.up {
    transform: rotate(180deg);
}

.icon-btn {
    display: flex;
}

/* title bar */
.titlebar {
    display: flex;
    justify-content: space-between;
    height: 47px;
    flex: none;
    background: var(--blue);
    color: #fff;
}

.tabs {
    display: flex;
    padding-top: 12px;
}

.tab {
    padding: 0 18px 2px;
}

.tab-file {
    padding: 0 26px 2px 24px;
}

.tab.active {
    background: var(--ribbon);
    color: #111;
}

.account {
    display: flex;
    align-items: center;
    gap: 10px;
    padding: 8px 4px 0 0;
}

.account .caret {
    background: #fff;
}

.style-pick {
    display: flex;
    align-items: center;
    gap: 78px;
}

.account-link {
    color: #fff;
    text-decoration: none;
}

.help {
    width: 20px;
    height: 20px;
    border-radius: 50%;
    background: #fff;
    color: #333;
    line-height: 20px;
}

/* ribbon */
.ribbon {
    position: relative;
    display: flex;
    flex: none;
    height: 120px;
    background: var(--ribbon);
    border-bottom: 1px solid var(--line);
}

.group {
    display: flex;
    flex-direction: column;
    margin: 3px 0;
    padding: 3px 5px 0;
    border-right: 1px solid #d4d6d4;
}

.group:first-child {
    padding-left: 8px;
    padding-right: 4px;
}

.group.roomy {
    padding-left: 6px;
    padding-right: 6px;
}

.group-body {
    display: flex;
    height: 88px;
}

.group-name {
    text-align: center;
    color: #666;
}

.big {
    display: flex;
    flex-direction: column;
    align-items: center;
    min-width: 50px;
    padding: 0 2px;
}

.big span {
    margin: 3px 0 5px;
}

.stack {
    display: flex;
    flex-direction: column;
    margin-top: -1px;
    padding: 0 3px 0 4px;
}

.small {
    display: flex;
    align-items: center;
    gap: 3px;
    height: 26px;
}

.highlight {
    position: absolute;
    left: 1459px;
    top: -20px;
    width: 74px;
    height: 74px;
    border-radius: 50%;
    background: rgba(255, 255, 0, 0.88);
}

/* workspace */
.workspace {
    display: flex;
    flex: 1;
    min-height: 0;
}

.panel {
    display: flex;
    flex-direction: column;
    flex: none;
    width: 392px;
    background: var(--panel);
    border-right: 5px solid #dad9d9;
}

.panel-title {
    display: flex;
    align-items: center;
    justify-content: space-between;
    height: 41px;
    padding: 0 8px 0 5px;
    background: #e8e8e8;
}

.panel-title h1 {
    font-size: 24px;
    font-weight: 400;
    line-height: 40px;
}

.panel-actions {
    display: flex;
    align-items: center;
    gap: 12px;
}

.panel-tools {
    display: flex;
    align-items: center;
    height: 35px;
    padding-left: 4px;
}

.tool {
    display: flex;
    align-items: center;
    justify-content: center;
    width: 28px;
    height: 26px;
}

.tool.split {
    width: 44px;
    gap: 8px;
}

.tool.pressed {
    width: 34px;
    background: #c6caca;
}

.grid-box {
    display: flex;
    flex-direction: column;
    flex: 1;
    min-height: 0;
    margin: 0 11px 0 12px;
    padding: 1px;
    border: 1px solid #ccc;
    background: #fff;
}

.grid-rows {
    flex: 1;
    overflow: hidden;
}

.planes {
    width: 100%;
    table-layout: fixed;
    border-collapse: collapse;
    color: #111;
}

.c-name { width: 112px; }
.c-wcs { width: 40px; }
.c-t { width: 30px; }
.c-show { width: 50px; }
.c-sec { width: 60px; }

.planes th {
    height: 22px;
    background: #f5f5f5;
    border-right: 1px solid #ccc;
    border-bottom: 1px solid #ccc;
    color: #555;
    font-size: 14px;
    font-weight: 400;
    line-height: 20px;
    white-space: nowrap;
    overflow: hidden;
}

.planes th.left {
    padding-left: 5px;
    text-align: left;
}

.planes th.cut {
    padding-left: 8px;
    text-align: left;
    border-right: none;
}

.sorted .drop {
    background: #777;
}

.planes td {
    height: 20px;
    border-right: 1px solid #eee;
    border-bottom: 1px solid #eee;
    font-size: 13px;
    line-height: 19px;
    text-align: center;
    white-space: nowrap;
}

.planes td.name {
    padding-left: 38px;
    border-bottom-color: #f5f5f5;
    font-size: 15px;
    text-align: left;
}

.planes td.checked {
    display: flex;
    align-items: center;
    gap: 21px;
    padding-left: 5px;
}

.planes .selected {
    background: #f1f1f1;
}

.scrollbar {
    display: flex;
    height: 21px;
    background: #eee;
}

.scrollbar button {
    display: flex;
    align-items: center;
    justify-content: center;
    width: 21px;
    background: #fff;
    border: 1px solid #bbb;
}

.thumb {
    flex: 1;
    margin-right: 11px;
    background: #fff;
    border: 1px solid #bbb;
    border-left: none;
}

/* plane properties */
.props {
    flex: none;
    padding: 9px 0 13px 13px;
    overflow: hidden;
}

.row {
    display: flex;
    align-items: center;
    height: 36px;
}

.label {
    flex: none;
    width: 106px;
    padding-bottom: 2px;
}

.row.work {
    align-items: flex-start;
    height: 46px;
}

.radios {
    flex: none;
    width: 133px;
}

.radios label,
.checks label {
    display: flex;
    align-items: center;
    gap: 4px;
    height: 23px;
}

.radios input {
    appearance: none;
    width: 14px;
    height: 14px;
    margin-left: -2px;
    border: 1px solid #999;
    border-radius: 50%;
    background: #fff;
}

.radios input:checked {
    background: radial-gradient(#333 3px, #fff 4px);
}

.row input[type="text"] {
    width: 88px;
    height: 24px;
    padding: 0 4px;
    border: 1px solid #b0b0b0;
    color: #888;
    font-size: 13px;
}

.row input.offset {
    flex: none;
    width: 46px;
    margin: 2px 14px 0 0;
}

.reset {
    flex: none;
    width: 96px;
    height: 28px;
    margin-top: 2px;
    padding-left: 6px;
    border: 1px solid #bbb;
    background: #fff;
    color: #aaa;
}

.swatch {
    width: 46px;
    height: 28px;
    background: #8181bd;
    border: 1px solid #66669a;
    color: #4c4c86;
    font-size: 13px;
}

.origin {
    display: flex;
    gap: 7px;
}

.dim,
.checks {
    color: var(--muted);
}

.origin-actions {
    display: flex;
    flex-direction: column;
    justify-content: center;
    gap: 14px;
    padding-top: 4px;
}

.origin-actions button {
    display: flex;
    align-items: center;
    justify-content: center;
    width: 32px;
    height: 32px;
    border: 1px solid #aaa;
    background: #fff;
}

.checks {
    padding-left: 107px;
}

.checks label {
    height: 22px;
}

.checks input {
    appearance: none;
    width: 14px;
    height: 14px;
    border: 1px solid #c4c4c4;
    background: #fff;
}

.row.note {
    align-items: flex-start;
    height: 47px;
    padding-top: 7px;
}

.note .label {
    line-height: 16px;
}

.note-box {
    position: relative;
    flex: 1;
    height: 40px;
    margin-right: 12px;
}

.note-box textarea {
    width: 100%;
    height: 100%;
    border: 1px solid #ccc;
    background: #fff;
    resize: none;
}

.spin {
    position: absolute;
    right: 7px;
    top: 8px;
    display: flex;
    flex-direction: column;
    gap: 12px;
}

.spin .drop {
    height: 6px;
    background: #bbb;
}

.panel-tabs {
    display: flex;
    flex: none;
    height: 27px;
    background: #e6e6e6;
    border-top: 1px solid #ccc;
    border-bottom: 1px solid #ccc;
}

.panel-tabs button {
    padding: 0 8px 2px;
}

.panel-tabs .active {
    background: #fff;
    border: solid #bbb;
    border-width: 0 1px 1px;
    padding: 0 7px 1px;
}

/* graphics window */
.view {
    display: flex;
    flex-direction: column;
    flex: 1;
    min-width: 0;
}

.canvas {
    position: relative;
    flex: 1;
    min-height: 0;
    overflow: hidden;
    background: var(--canvas);
}

.drawing {
    position: absolute;
    width: 100%;
    height: 100%;
}

.axis-text {
    font: 17px "DejaVu Sans", sans-serif;
}

.cube-tip {
    position: absolute;
    left: 1206px;
    top: 295px;
    padding: 0 3px;
    border: 1px solid #555;
    background: #ffffe3;
    color: #111;
    line-height: 18px;
}

.gnomon {
    position: absolute;
    font: bold 13px "DejaVu Sans", sans-serif;
    text-anchor: middle;
}

.gnomon-tl {
    left: 46px;
    top: 6px;
}

.gnomon-tr {
    right: 4px;
    top: 6px;
    z-index: 2;
}

.gnomon-bl {
    left: 46px;
    bottom: 45px;
}

.view-name {
    position: absolute;
    left: 20px;
    bottom: 6px;
    color: #000;
    font-size: 13px;
    font-weight: 700;
}

.select-bar {
    position: absolute;
    left: 474px;
    top: 6px;
    display: flex;
    align-items: center;
    height: 45px;
    padding: 0 21px 0 22px;
    border: 1px solid #c8cbc9;
    border-radius: 22px;
    background: #e4e5e4;
    color: #777;
}

.select-bar button {
    display: flex;
    align-items: center;
    justify-content: center;
    width: 28px;
    height: 43px;
}

.select-bar .cursor-mode {
    width: 74px;
    gap: 3px;
}

.select-bar .cursor-mode .caret {
    margin-left: 5px;
}

.select-bar .cursor-mode span {
    padding-bottom: 4px;
}

.select-bar .xyz {
    width: 28px;
}

.select-bar .menu {
    width: 48px;
    gap: 10px;
}

.select-bar .caret {
    background: #aaa;
}

.select-bar .on {
    border: 1px solid #a3c6d8;
    background: #ccdce2;
}

.sep {
    width: 1px;
    height: 43px;
    background: #d5d8d6;
}

.faint {
    opacity: 0.5;
}

.fainter {
    opacity: 0.25;
}

.masks {
    position: absolute;
    right: 8px;
    top: 1px;
    display: flex;
    flex-direction: column;
    gap: 7px;
}

.masks button {
    display: flex;
    align-items: center;
    justify-content: center;
    width: 44px;
    height: 44px;
    border: 1px solid #cfcfcf;
    border-radius: 50%;
    background: rgba(232, 233, 232, 0.65);
}

.masks .slash {
    background: linear-gradient(135deg, transparent 49%, #cdcfce 50%, transparent 51%), rgba(232, 233, 232, 0.65);
}

.masks svg {
    opacity: 0.8;
}

.ruler {
    position: absolute;
    right: 22px;
    bottom: 11px;
    display: flex;
    flex-direction: column;
    width: 98px;
    border: solid #111;
    border-width: 0 1px;
    color: #000;
    font-family: "DejaVu Sans", "Noto Sans CJK SC", sans-serif;
    font-size: 13px;
    font-weight: 700;
    line-height: 12px;
    text-align: center;
}

.ruler-value {
    border-bottom: 1px solid #111;
    white-space: nowrap;
}

.sheets {
    display: flex;
    align-items: flex-start;
    flex: none;
    height: 32px;
    background: linear-gradient(#a5aaa6 1px, #fff 1px, #fff 4px, #a5aaa6 4px, #a5aaa6 5px, #e8e8e8 5px);
    border-bottom: 1px solid #ccc;
}

.sheet {
    height: 31px;
    padding: 0 7px;
    background: #fff;
    border: 1px solid #bbb;
    border-top: none;
}

.sheet-add {
    padding: 7px 10px 0;
}

.sheet-nav {
    margin-left: auto;
    padding: 10px 10px 0 0;
}

/* status bar */
.status {
    display: flex;
    align-items: center;
    justify-content: flex-end;
    flex: none;
    height: 29px;
    padding-right: 36px;
    white-space: nowrap;
}

.status button {
    display: flex;
    align-items: center;
    color: #111;
}

.status b {
    width: 25px;
    font-weight: 400;
}

.st-count {
    margin: 0 90px 0 18px;
}

.coord {
    display: flex;
    margin-right: 40px;
}

.status .coord-z {
    margin-right: 15px;
}

.status .caret {
    margin-left: 12px;
}

.st-3d {
    margin-right: 14px;
}

.st-plane {
    margin-right: 9px;
}

.shading {
    display: flex;
    align-items: center;
    height: 27px;
}

.status .shading button {
    justify-content: center;
    width: 31px;
    height: 23px;
}

.status .shading .on {
    background: #c9cbca;
}

.ball {
    width: 16px;
    height: 16px;
    border-radius: 50%;
    background: radial-gradient(circle at 40% 35%, #f4f4f4, #888 90%);
}

.pause {
    position: fixed;
    right: 6px;
    bottom: 5px;
    display: flex;
    align-items: center;
    justify-content: center;
    width: 40px;
    height: 40px;
    background: #333;
}
```
